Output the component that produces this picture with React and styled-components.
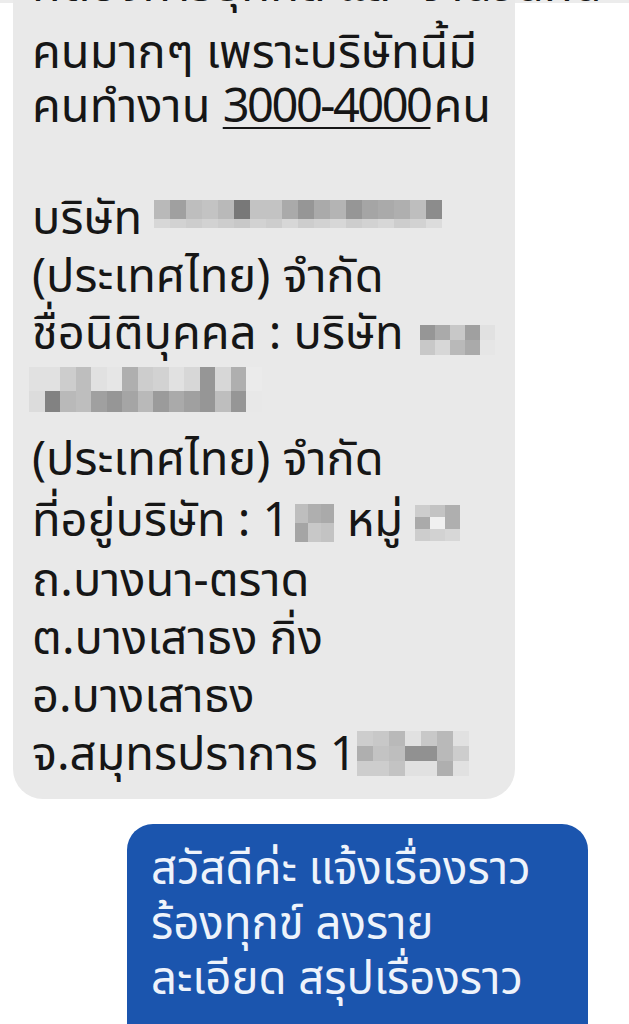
import React from 'react';
import styled, { createGlobalStyle } from 'styled-components';

const GlobalStyle = createGlobalStyle`
  html, body {
    margin: 0;
    padding: 0;
    background: #ffffff;
  }
  body {
    font-family: "Noto Sans Thai", "Noto Sans", "Liberation Sans", sans-serif;
  }
`;

// grey levels for the blurred (pixelated) parts of the screenshot
const mosaics = {
  company: {
    cols: 18,
    cell: 16,
    rows: [19, 9],
    tones: [
      [185, 160, 190, 195, 185, 120, 195, 195, 170, 150, 170, 180, 150, 165, 170, 175, 190, 140],
      [215, 210, 205, 210, 205, 200, 210, 205, 215, 205, 210, 215, 205, 210, 215, 205, 210, 220],
    ],
  },
  legalTail: {
    cols: 5,
    cell: 15,
    rows: [15, 15],
    tones: [
      [150, 170, 200, 160, 225],
      [200, 215, 185, 170, 230],
    ],
  },
  legalName: {
    cols: 15,
    cell: 15.5,
    rows: [24, 21],
    tones: [
      [225, 225, 205, 190, 225, 230, 175, 205, 210, 225, 215, 150, 215, 175, 235],
      [220, 130, 185, 190, 160, 150, 165, 185, 155, 170, 160, 150, 190, 150, 232],
    ],
  },
  houseNo: {
    cols: 3,
    cell: 13,
    rows: [19, 19],
    tones: [
      [190, 175, 170],
      [165, 200, 195],
    ],
  },
  moo: {
    cols: 3,
    cell: 15,
    rows: [12, 12, 12],
    tones: [
      [205, 195, 175],
      [170, 240, 175],
      [205, 210, 215],
    ],
  },
  zip: {
    cols: 7,
    cell: 16,
    rows: [15, 15, 15],
    tones: [
      [205, 200, 185, 225, 200, 185, 225],
      [175, 195, 190, 145, 145, 185, 205],
      [205, 205, 195, 225, 225, 175, 225],
    ],
  },
};

const Mosaic = ({ name, shift = 0, gap = 0 }) => {
  const m = mosaics[name];
  return (
    <MosaicGrid $cols={m.cols} $cell={m.cell} $rows={m.rows} $shift={shift} $gap={gap}>
      {m.tones.flat().map((t, i) => (
        <MosaicCell key={i} $tone={t} />
      ))}
    </MosaicGrid>
  );
};

const App = () => (
  <>
    <GlobalStyle />
    <Page>
      <Thread>
        <IncomingBubble>
          <Line $h={80}>ที่ต้องการบุคคล และ จำนวนคน</Line>
          <Line $h={54}>คนมากๆ เพราะบริษัทนี้มี</Line>
          <Line $h={54}>
            คนทำงาน <Marked>3000-4000</Marked>คน
          </Line>
          <Line $h={56}>&nbsp;</Line>
          <Line>
            บริษัท <Mosaic name="company" shift={-7} />
          </Line>
          <Line $h={57}>(ประเทศไทย) จำกัด</Line>
          <Line>
            ชื่อนิติบุคคล : บริษัท <Mosaic name="legalTail" shift={4} gap={4} />
          </Line>
          <Line $h={66} $flush>
            <Mosaic name="legalName" shift={-8} />
          </Line>
          <Line $h={61}>(ประเทศไทย) จำกัด</Line>
          <Line $h={61}>
            ที่อยู่บริษัท : 1<Mosaic name="houseNo" gap={6} /> หมู่ <Mosaic name="moo" />
          </Line>
          <Line $h={59}>ถ.บางนา-ตราด</Line>
          <Line>ต.บางเสาธง กิ่ง</Line>
          <Line>อ.บางเสาธง</Line>
          <Line>
            จ.สมุทรปราการ 1<Mosaic name="zip" shift={-3} />
          </Line>
        </IncomingBubble>

        <OutgoingBubble>
          <Line $h={55} $small>สวัสดีค่ะ แจ้งเรื่องราว</Line>
          <Line $h={55} $small>ร้องทุกข์ ลงราย</Line>
          <Line $h={55} $small>ละเอียด สรุปเรื่องราว</Line>
        </OutgoingBubble>
      </Thread>
    </Page>
  </>
);

export default App;

const Page = styled.div`
  width: 629px;
  height: 1024px;
  overflow: hidden;
  background: linear-gradient(#ececec, #ececec) top / 100% 3px no-repeat, #ffffff;
`;

const Thread = styled.div`
  display: flex;
  flex-direction: column;
  align-items: flex-start;
`;

const IncomingBubble = styled.div`
  margin: -68px 0 0 13px;
  width: 502px;
  box-sizing: border-box;
  padding: 15px 10px 14px 19px;
  background: #e9e9e9;
  color: #161616;
  border-radius: 0 0 30px 30px;
`;

const OutgoingBubble = styled.div`
  margin: 25px 0 0 127px;
  width: 461px;
  box-sizing: border-box;
  padding: 19px 20px 80px 24px;
  background: #1b55ae;
  color: #eef3fb;
  border-radius: 26px;
`;

const Line = styled.div`
  font-size: ${({ $small }) => ($small ? '45.5px' : '47px')};
  line-height: ${({ $h = 58 }) => $h}px;
  height: ${({ $h = 58 }) => $h}px;
  white-space: nowrap;
  margin-left: ${({ $flush }) => ($flush ? '-3px' : '0')};
`;

const Marked = styled.span`
  letter-spacing: -2.5px;
  text-decoration: underline;
  text-decoration-thickness: 2px;
  text-underline-offset: 5px;
  margin-right: 3px;
`;

const MosaicGrid = styled.span`
  display: inline-grid;
  vertical-align: middle;
  position: relative;
  top: ${({ $shift }) => $shift}px;
  margin-left: ${({ $gap }) => $gap}px;
  grid-template-columns: repeat(${({ $cols }) => $cols}, ${({ $cell }) => $cell}px);
  grid-template-rows: ${({ $rows }) => $rows.map((r) => `${r}px`).join(' ')};
  filter: blur(0.6px);
`;

const MosaicCell = styled.span`
  background: ${({ $tone }) => `rgb(${$tone}, ${$tone}, ${$tone})`};
`;
